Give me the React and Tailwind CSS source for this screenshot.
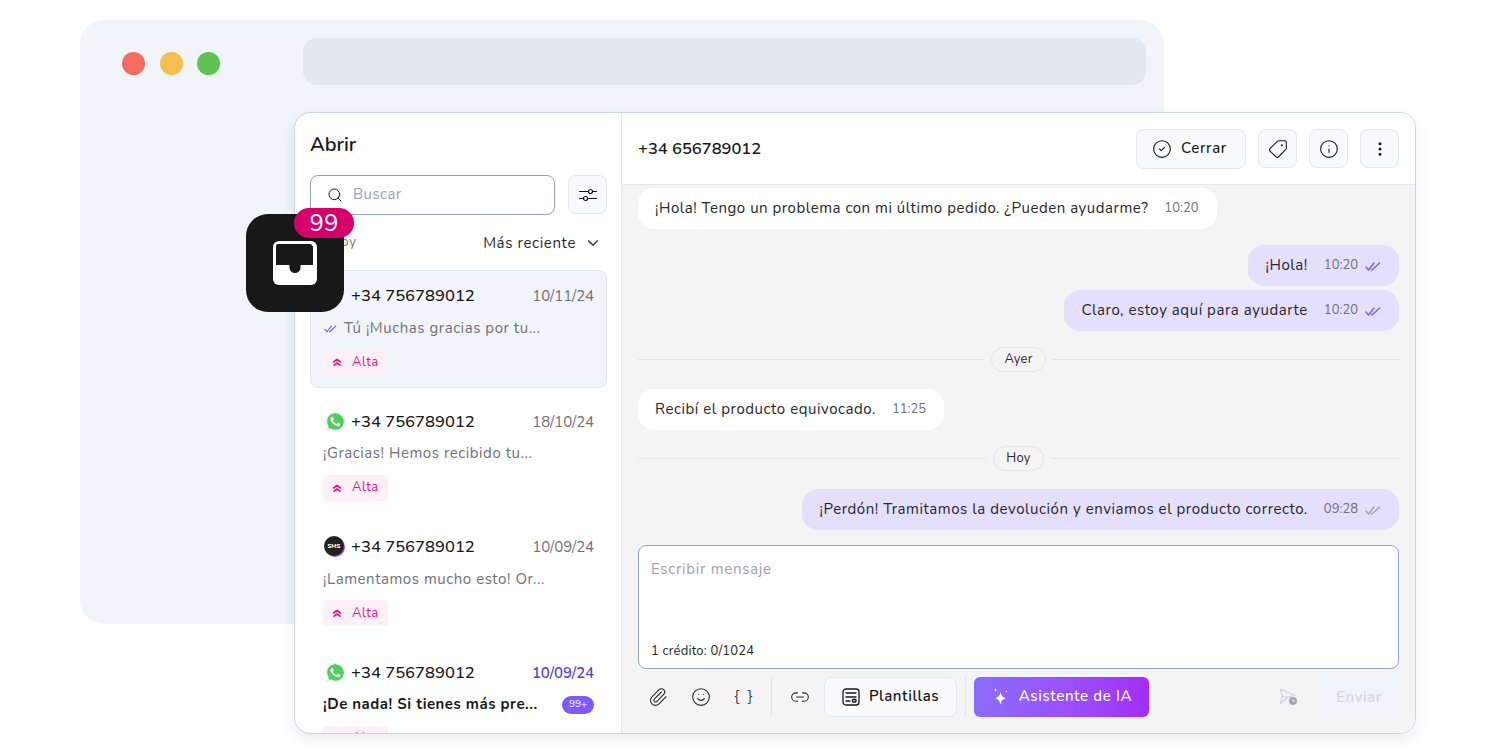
import React from "react";
import { Search, ChevronDown, CircleCheck, Tag, Info, EllipsisVertical, Paperclip, Smile, Link2 } from "lucide-react";
import { FaWhatsapp } from "react-icons/fa";

function Ticks({ className = "" }) {
  return (
    <svg viewBox="0 0 16 10" className={className} fill="none" stroke="currentColor" strokeWidth="1.4" strokeLinecap="round" strokeLinejoin="round">
      <path d="M1 6l2.500 3L9 2" />
      <path d="M6.500 8.500L7 9 14.500 2" />
    </svg>
  );
}

function PriorityIcon() {
  return (
    <svg viewBox="0 0 10 10" className="w-[10px] h-[10px] text-[#e5177f]" fill="none" stroke="currentColor" strokeWidth="1.6" strokeLinecap="round" strokeLinejoin="round">
      <path d="M1.500 5L5 2.500 8.500 5" />
      <path d="M2 8.200L5 6 8 8.200" />
    </svg>
  );
}

function AltaTag() {
  return (
    <div className="flex items-center gap-[10px] w-[65px] h-[26px] pl-[9px] rounded-[4px] bg-[#fdf1f7] text-[#e5177f] text-[13px] leading-none tracking-[0.5px]">
      <PriorityIcon />
      <span>Alta</span>
    </div>
  );
}

function WhatsApp() {
  return (
    <span className="relative block w-5 h-5 shrink-0">
      <span className="absolute left-px top-px w-[18px] h-[18px] rounded-full bg-[#4fce5d]" />
      <FaWhatsapp className="absolute -left-[1.5px] -top-[1.5px] w-[23px] h-[23px] text-[#f0f0f0]" />
    </span>
  );
}

function Sms() {
  return (
    <span className="relative flex items-center justify-center w-5 h-5 rounded-full bg-[#7c5cfc] shrink-0">
      <span className="absolute -top-px -left-px flex items-center justify-center w-5 h-5 rounded-full bg-[#222222] text-white text-[6px] font-extrabold leading-none">SMS</span>
    </span>
  );
}

function Item({ icon, date, dateClass = "text-[#71717a]", children, selected, extra }) {
  return (
    <div className={`mx-[15px] w-[297px] h-[118px] mb-[7.5px] shrink-0 rounded-[8px] border px-[12px] pt-[15px] ${selected ? "bg-[#f1f4f9] border-[#e2e8f0]" : "bg-white border-transparent"}`}>
      <div className="flex items-center h-5">
        <div className="w-5 shrink-0 ml-[2px]">{icon}</div>
        <span className="ml-[6px] text-[16.6px] font-medium text-[#18181b] leading-5">+34 756789012</span>
        <span className={`ml-auto text-[15px] leading-5 -tracking-[0.1px] ${dateClass}`}>{date}</span>
      </div>
      <div className="flex items-center mt-[12px] h-5">{children}{extra}</div>
      <div className="mt-[11px]"><AltaTag /></div>
    </div>
  );
}

function IconBtn({ children, className = "" }) {
  return <div className={`flex items-center justify-center rounded-[8px] border border-[#e2e8f0] bg-[#f8fafc] text-[#18181b] ${className}`}>{children}</div>;
}

function Bubble({ mine, text, time, ticks, className = "", track = "tracking-[0.56px]" }) {
  return (
    <div className={`flex items-center h-[41px] rounded-[16px] pl-[17px] pr-[18px] ${mine ? "self-end bg-[#e4dffd]" : "self-start bg-white"} ${className}`}>
      <span className={`text-[15px] leading-5 -mt-px text-[#27272a] ${track}`}>{text}</span>
      <span className="ml-[16px] text-[13px] leading-4 -mt-px text-[#71717a]">{time}</span>
      {ticks && <Ticks className={`ml-[7px] w-[16px] h-[10px] ${ticks}`} />}
    </div>
  );
}

function Divider({ label, className = "" }) {
  return (
    <div className={`flex items-center gap-[7px] ${className}`}>
      <div className="flex-1 h-px bg-[#e4e4e7]" />
      <span className="flex items-center h-[25px] px-3 rounded-full border border-[#e4e4e7] bg-[#f4f4f5] text-[13px] text-[#27272a] tracking-[0.2px]">{label}</span>
      <div className="flex-1 h-px bg-[#e4e4e7]" />
    </div>
  );
}

export default function App() {
  return (
    <div className="relative w-[1496px] h-[754px] overflow-hidden bg-white pl-[80px] pt-[20px] font-['Nunito','Noto_Sans',sans-serif]">
      {/* browser backdrop */}
      <div className="w-[1084px] h-[604px] rounded-[24px] bg-[#f1f4f9] pr-[18px] pt-[18px]">
        <div className="flex items-start">
          <div className="flex gap-[14.5px] ml-[42px] mt-[14px]">
            <span className="w-[23px] h-[23px] rounded-full bg-[#f26d60]" />
            <span className="w-[23px] h-[23px] rounded-full bg-[#f6bd4f]" />
            <span className="w-[23px] h-[23px] rounded-full bg-[#5fc454]" />
          </div>
          <div className="ml-[83px] flex-1 h-[47px] rounded-[14px] bg-[#e2e8f0]" />
        </div>
      </div>

      {/* app window */}
      <div className="absolute left-[294px] top-[112px] w-[1122px] h-[622px] flex rounded-[16px] border border-[#cbd5e1] bg-white overflow-hidden shadow-[0_6px_16px_rgba(15,23,42,0.08)]">
        {/* sidebar */}
        <aside className="w-[327px] shrink-0 flex flex-col border-r border-[#e2e8f0] overflow-hidden">
          <h2 className="ml-[15px] mt-[20px] text-[20px] font-semibold leading-6 text-[#18181b]">Abrir</h2>
          <div className="flex mt-[18px] ml-[15px] gap-[13px]">
            <div className="flex items-center w-[245px] h-[40px] rounded-[8px] border border-[#94a3b8] pl-[16px]">
              <Search className="w-[16px] h-[16px] text-[#18181b]" strokeWidth={1.5} />
              <span className="ml-[10px] -mt-px text-[15px] text-[#94a3b8] tracking-[0.45px]">Buscar</span>
            </div>
            <IconBtn className="w-[39px] h-[39px]">
              <svg viewBox="0 0 20 20" className="w-5 h-5" fill="none" stroke="currentColor" strokeWidth="1.2" strokeLinecap="round">
                <path d="M1.500 6.500h9M14.500 6.500h4M1.500 13.500h4M9.500 13.500h9" />
                <circle cx="12.500" cy="6.500" r="2" />
                <circle cx="7.500" cy="13.500" r="2" />
              </svg>
            </IconBtn>
          </div>
          <div className="flex items-center mt-[18px] ml-[15px] mr-[19px] h-5">
            <span className="text-[13px] text-[#71717a] tracking-[0.6px]">Sort by</span>
            <span className="ml-auto text-[15px] text-[#27272a] tracking-[0.64px]">Más reciente</span>
            <ChevronDown className="ml-[8px] w-[18px] h-[18px] text-[#27272a]" strokeWidth={1.5} />
          </div>
          <div className="mt-[17px] flex flex-col">
            <Item selected icon={<span />} date="10/11/24">
              <Ticks className="w-[13px] h-[9px] text-[#7c5cfc] mr-[7px] ml-[1px]" />
              <span className="text-[15px] text-[#71717a] tracking-[0.55px]">Tú ¡Muchas gracias por tu...</span>
            </Item>
            <Item icon={<WhatsApp />} date="18/10/24">
              <span className="text-[15px] text-[#71717a] tracking-[0.55px]">¡Gracias! Hemos recibido tu...</span>
            </Item>
            <Item icon={<Sms />} date="10/09/24">
              <span className="text-[15px] text-[#71717a] tracking-[0.55px]">¡Lamentamos mucho esto! Or...</span>
            </Item>
            <Item icon={<WhatsApp />} date="10/09/24" dateClass="text-[#5b3fd1] font-semibold"
              extra={<span className="ml-auto flex items-center justify-center w-[32px] h-[18px] rounded-full bg-[#7c5cfc] text-white text-[10px]">99+</span>}>
              <span className="text-[15px] font-bold text-[#18181b] tracking-[0.5px]">¡De nada! Si tienes más pre...</span>
            </Item>
          </div>
        </aside>

        {/* conversation */}
        <main className="flex-1 flex flex-col min-w-0 bg-[#f4f4f5]">
          <header className="flex items-center h-[72px] shrink-0 px-[16px] bg-white border-b border-[#e2e8f0]">
            <span className="mt-[2px] text-[16.5px] font-semibold text-[#18181b]">+34 656789012</span>
            <IconBtn className="ml-auto w-[110px] h-[40px] gap-[9px] pr-[3px]">
              <CircleCheck className="w-[20px] h-[20px]" strokeWidth={1.3} />
              <span className="text-[15px] font-medium tracking-[0.65px] -mt-px">Cerrar</span>
            </IconBtn>
            <IconBtn className="ml-[12px] w-[39px] h-[39px]"><Tag className="w-[20px] h-[20px] rotate-90" strokeWidth={1.3} /></IconBtn>
            <IconBtn className="ml-[12px] w-[39px] h-[39px]"><Info className="w-[20px] h-[20px]" strokeWidth={1.3} /></IconBtn>
            <IconBtn className="ml-[12px] w-[39px] h-[39px]"><EllipsisVertical className="w-[18px] h-[18px]" strokeWidth={2} /></IconBtn>
          </header>
          <div className="flex-1 flex flex-col px-[16px] pt-[3px] min-h-0">
            <Bubble track="tracking-[0.53px]" text="¡Hola! Tengo un problema con mi último pedido. ¿Pueden ayudarme?" time="10:20" />
            <Bubble mine text="¡Hola!" time="10:20" ticks="text-[#7c5cfc]" className="mt-[16px]" />
            <Bubble mine text="Claro, estoy aquí para ayudarte" time="10:20" ticks="text-[#7c5cfc]" className="mt-[4px]" />
            <Divider label="Ayer" className="mt-[16px]" />
            <Bubble text="Recibí el producto equivocado." time="11:25" className="mt-[17px]" />
            <Divider label="Hoy" className="mt-[16px]" />
            <Bubble mine text="¡Perdón! Tramitamos la devolución y enviamos el producto correcto." time="09:28" ticks="text-[#a1a1aa]" className="mt-[18px]" />
            <div className="mt-[15px] flex flex-col justify-between h-[124px] rounded-[8px] border border-[#94a3b8] bg-white px-[12px] pt-[12px] pb-[7px]">
              <span className="text-[15px] text-[#a1a1aa] tracking-[0.73px]">Escribir mensaje</span>
              <span className="text-[13px] text-[#27272a] tracking-[0.2px]">1 crédito: 0/1024</span>
            </div>
            <div className="flex items-center h-[40px] mt-[8px] text-[#27272a]">
              <Paperclip className="ml-[10px] w-[20px] h-[20px]" strokeWidth={1.3} />
              <Smile className="ml-[23px] w-[20px] h-[20px]" strokeWidth={1.3} />
              <span className="ml-[23px] w-[20px] text-center text-[16px] font-light leading-none -mt-[2px] tracking-[2px] whitespace-nowrap text-[#18181b]">{"{ }"}</span>
              <div className="ml-[17px] w-px h-[40px] bg-[#e4e4e7]" />
              <Link2 className="ml-[18px] w-[20px] h-[20px]" strokeWidth={1.3} />
              <IconBtn className="ml-[14px] w-[133px] h-[40px] gap-[9px]">
                <svg viewBox="0 0 18 18" className="w-[18px] h-[18px]" fill="none" stroke="currentColor" strokeWidth="1.3" strokeLinecap="round" strokeLinejoin="round">
                  <rect x="1" y="1" width="16" height="16" rx="3" />
                  <path d="M4 5h10M4 9h10M4 13h4" />
                  <rect x="10.500" y="11.500" width="3.500" height="2.500" rx=".5" />
                </svg>
                <span className="text-[15px] font-semibold tracking-[0.55px] -mt-px">Plantillas</span>
              </IconBtn>
              <div className="ml-[8px] w-px h-[40px] bg-[#e4e4e7]" />
              <div className="ml-[8px] flex items-center justify-center gap-[8px] w-[175px] h-[40px] rounded-[6px] bg-gradient-to-r from-[#8b6cfc] to-[#a42bf7] text-white">
                <svg viewBox="0 0 20 20" className="w-[20px] h-[20px]" fill="currentColor">
                  <path d="M9.500 5c.8 4 2.200 5.500 6 6.300-3.800.8-5.200 2.300-6 6.700-.8-4.400-2.200-5.900-6-6.700 3.800-.8 5.200-2.300 6-6.300z" />
                  <path d="M4.500 1c.2 1.300.6 1.700 1.800 1.900-1.200.2-1.600.6-1.800 1.900-.2-1.300-.6-1.700-1.800-1.900 1.200-.2 1.600-.6 1.800-1.900zM15.500 3c.15.9.45 1.200 1.300 1.300-.85.1-1.150.4-1.300 1.300-.15-.9-.45-1.200-1.300-1.300.85-.1 1.150-.4 1.300-1.300z" />
                </svg>
                <span className="text-[15px] font-medium tracking-[0.65px] -mt-px">Asistente de IA</span>
              </div>
              <svg viewBox="0 0 20 20" className="ml-auto w-[20px] h-[20px] text-[#cbd5e1]" fill="none" stroke="currentColor" strokeWidth="1.1" strokeLinejoin="round">
                <path d="M2 2l15 6.500-7 1.500-8 7 2.500-7.500z" />
                <path d="M4.500 9.500l5.500.5" />
                <circle cx="15" cy="14" r="4" fill="#a1a9b5" stroke="none" />
                <path d="M15 12v2.200h1.800" stroke="#f4f4f5" strokeWidth=".9" />
              </svg>
              <div className="ml-[21px] flex items-center justify-center w-[80px] h-[40px] rounded-[6px] bg-[#f0f3f8] text-[#d4d8de] text-[15px] font-semibold tracking-[0.5px]">Enviar</div>
            </div>
          </div>
        </main>
      </div>

      {/* floating inbox badge */}
      <div className="absolute left-[246px] top-[214px] flex items-center justify-center w-[98px] h-[98px] rounded-[22px] bg-[#181818]">
        <svg viewBox="0 0 44 44" className="w-[44px] h-[44px]">
          <rect width="44" height="44" rx="6" fill="#ffffff" />
          <path d="M3 5a2 2 0 0 1 2-2h32a2 2 0 0 1 2 2h1v19H27.500v2.500a5.500 5.500 0 0 1-11 0V24H3z" fill="#181818" />
        </svg>
      </div>
      <div className="absolute left-[294px] top-[208px] flex items-center justify-center w-[60px] h-[30px] rounded-full bg-[#d6006b] text-white text-[24px] leading-none">99</div>
    </div>
  );
}
